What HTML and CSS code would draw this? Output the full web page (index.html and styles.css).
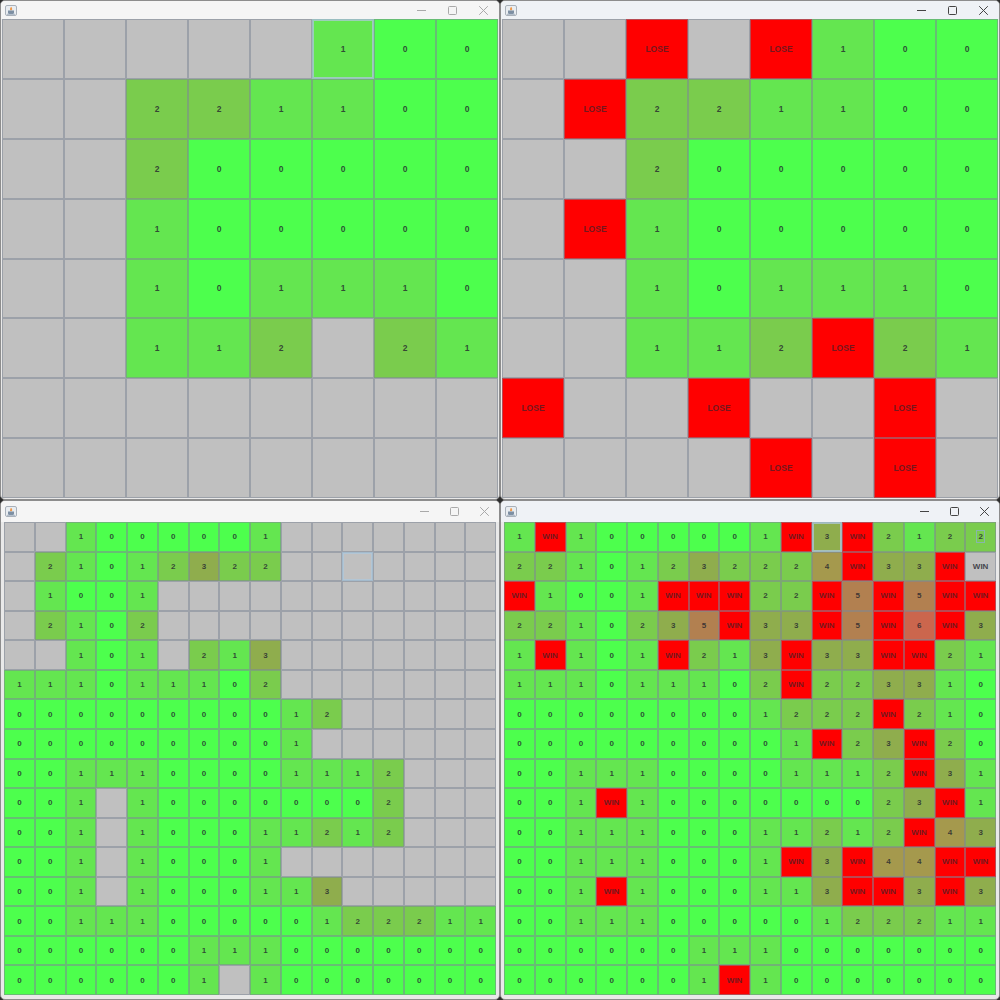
FILE: index.html
```html
<!DOCTYPE html>
<html lang="en">
<head>
<meta charset="utf-8">
<title>Minesweeper boards</title>
<link rel="stylesheet" href="styles.css">
</head>
<body>
<svg class="defs" width="0" height="0" aria-hidden="true">
  <symbol id="cup" viewBox="0 0 12 11">
    <rect x="0.5" y="0.5" width="11" height="10" rx="1.5" fill="#e9edf1" stroke="#a9b1ba"/>
    <path d="M6 1.8c1.3 1.2 1.5 2.2.9 3.4H5.2c-.6-1 .1-2.2.8-3.4z" fill="#ee9a4c"/>
    <path d="M3 5.5h6v2.2c0 .8-.6 1.2-1.2 1.2H4.2C3.600 8.900 3 8.500 3 7.700z" fill="#7d8fa3"/>
    <path d="M2 9.300h8" stroke="#96a5b5" stroke-width="0.8"/>
  </symbol>
  <symbol id="min" viewBox="0 0 11 11"><path d="M1 5.500h9" stroke="currentColor" fill="none"/></symbol>
  <symbol id="max" viewBox="0 0 11 11"><rect x="1.500" y="1.500" width="8" height="8" rx="1" stroke="currentColor" fill="none"/></symbol>
  <symbol id="close" viewBox="0 0 11 11"><path d="M1.200 1.200l8.600 8.600M9.800 1.200l-8.600 8.600" stroke="currentColor" fill="none"/></symbol>
</svg>
<main class="desktop">
  <section class="window window-top inactive">
    <header class="titlebar">
      <svg class="app-icon"><use href="#cup"/></svg>
      <div class="controls">
        <span class="ctl"><svg class="glyph"><use href="#min"/></svg></span>
        <span class="ctl"><svg class="glyph"><use href="#max"/></svg></span>
        <span class="ctl"><svg class="glyph"><use href="#close"/></svg></span>
      </div>
    </header>
    <div class="board board-8" id="b1"></div>
  </section>
  <section class="window window-top active">
    <header class="titlebar">
      <svg class="app-icon"><use href="#cup"/></svg>
      <div class="controls">
        <span class="ctl"><svg class="glyph"><use href="#min"/></svg></span>
        <span class="ctl"><svg class="glyph"><use href="#max"/></svg></span>
        <span class="ctl"><svg class="glyph"><use href="#close"/></svg></span>
      </div>
    </header>
    <div class="board board-8" id="b2"></div>
  </section>
  <section class="window window-bottom inactive">
    <header class="titlebar">
      <svg class="app-icon"><use href="#cup"/></svg>
      <div class="controls">
        <span class="ctl"><svg class="glyph"><use href="#min"/></svg></span>
        <span class="ctl"><svg class="glyph"><use href="#max"/></svg></span>
        <span class="ctl"><svg class="glyph"><use href="#close"/></svg></span>
      </div>
    </header>
    <div class="board board-16" id="b3"></div>
  </section>
  <section class="window window-bottom active">
    <header class="titlebar">
      <svg class="app-icon"><use href="#cup"/></svg>
      <div class="controls">
        <span class="ctl"><svg class="glyph"><use href="#min"/></svg></span>
        <span class="ctl"><svg class="glyph"><use href="#max"/></svg></span>
        <span class="ctl"><svg class="glyph"><use href="#close"/></svg></span>
      </div>
    </header>
    <div class="board board-16" id="b4"></div>
  </section>
</main>
<script src="script.js"></script>
</body>
</html>
```
FILE: styles.css
```css
* { box-sizing: border-box; }
html, body { margin: 0; padding: 0; background: #2c2c2c; }
.defs { position: absolute; }
.desktop {
  width: 1000px;
  height: 1000px;
  display: grid;
  grid-template-columns: 500px 500px;
  grid-template-rows: 500px 500px;
  overflow: hidden;
}
.window {
  display: flex;
  flex-direction: column;
  border: 1px solid #8d8d8d;
  border-radius: 5px;
  background: #e9e9e9;
  overflow: hidden;
}
.titlebar {
  display: flex;
  align-items: center;
  justify-content: space-between;
  flex: none;
  padding-left: 4px;
}
.inactive .titlebar { background: #f5f5f5; color: #a9a9a9; }
.active .titlebar { background: #eff2f6; color: #444; }
.window-top .titlebar { height: 18px; }
.window-bottom .titlebar { height: 21px; }
.app-icon { width: 12px; height: 11px; display: block; }
.controls { display: flex; }
.ctl { display: flex; justify-content: center; align-items: center; height: 18px; }
.window-top .ctl { width: 31px; }
.window-bottom .ctl { width: 30px; }
.glyph { width: 11px; height: 11px; display: block; }
.board { display: grid; flex: none; }
.board-8 {
  grid-template-columns: repeat(8, 62px);
  grid-template-rows: repeat(8, 1fr);
  height: 479px;
  margin-left: 1px;
  font-size: 8.5px;
}
.board-16 {
  grid-template-columns: repeat(16, 30.75px);
  grid-template-rows: repeat(16, 1fr);
  height: 473px;
  margin-left: 3px;
  font-size: 8px;
}
.cell {
  display: flex;
  align-items: center;
  justify-content: center;
  border: 1px solid rgba(125, 135, 150, .55);
  font-family: "Liberation Sans", Arial, sans-serif;
  font-weight: bold;
  color: rgba(35, 35, 45, .8);
}
.g  { background: #c0c0c0; }
.x  { background: #ff0000; color: rgba(45, 35, 45, .68); }
.n0 { background: #4dff4d; }
.n1 { background: #64e650; }
.n2 { background: #7acc4d; }
.n3 { background: #8fad4d; }
.n4 { background: #a5994d; }
.n5 { background: #b28050; }
.n6 { background: #cb664d; }
.focus { box-shadow: inset 0 0 0 1px rgba(175, 200, 220, .75); border-color: rgba(160, 185, 205, .9); }
.ring { outline: 1px solid rgba(140, 175, 195, .8); padding: 1px 1px; line-height: 9px; }
```
FILE: script.js
```js
var boards = {
  b1: { word: "", focus: "0,5", rows: [
    "ggggg100","gg221100","gg200000","gg100000",
    "gg101110","gg112g21","gggggggg","gggggggg"] },
  b2: { word: "LOSE", rows: [
    "ggxgx100","gx221100","gg200000","gx100000",
    "gg101110","gg112x21","xggxggxg","ggggxgxg"] },
  b3: { word: "", focus: "1,11", rows: [
    "gg100000 1ggggggg".replace(" ",""),
    "g21012322ggggggg","g1001ggggggggggg","g2102ggggggggggg",
    "gg101g213ggggggg","111011102ggggggg","00000000012ggggg","0000000001gggggg",
    "0011100001112ggg","001g100000002ggg","001g100011212ggg","001g10001ggggggg",
    "001g1000113ggggg","0011100000122211","0000001110000000","0000001g10000000"] },
  b4: { word: "WIN", focus: "0,10", ring: "0,15", rows: [
    "1x1000001x3x2122",
    "2210123222 4x33xw".replace(" ",""),
    "x1001xxx22x5x5xx",
    "2210235x33x5x6x3",
    "1x101x213x33xx21","111011102x223310","000000001222x210","0000000001x23x20",
    "0011100001112x31","001x1000000023x1","0011100011212x43","001110001x3x44xx",
    "001x1000113xx3x3","0011100000122211","0000001110000000","0000001x10000000"] }
};

Object.keys(boards).forEach(function (id) {
  var spec = boards[id];
  var host = document.getElementById(id);
  spec.rows.forEach(function (row, r) {
    row.split("").forEach(function (ch, c) {
      var cell = document.createElement("div");
      var text = "";
      var kind = "n" + ch;
      if (ch === "g") { kind = "g"; }
      if (ch === "x") { kind = "x"; text = spec.word; }
      if (ch === "w") { kind = "g"; text = spec.word; }
      if (/\d/.test(ch)) { text = ch; }
      cell.className = "cell " + kind + (spec.focus === r + "," + c ? " focus" : "");
      var label = document.createElement("span");
      label.textContent = text;
      if (spec.ring === r + "," + c) { label.className = "ring"; }
      cell.appendChild(label);
      host.appendChild(cell);
    });
  });
});
```
